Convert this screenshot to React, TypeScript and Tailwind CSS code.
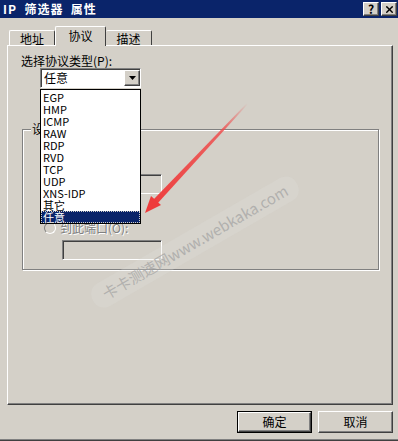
import { X } from "lucide-react";

const font = { fontFamily: "'Noto Sans CJK SC', 'Liberation Sans', sans-serif" };

const protocols = ["EGP", "HMP", "ICMP", "RAW", "RDP", "RVD", "TCP", "UDP", "XNS-IDP", "其它", "任意"];

const raised =
  "border border-t-white border-l-white border-r-[#404040] border-b-[#404040] shadow-[inset_-1px_-1px_0_#808080]";
const sunken =
  "border border-t-[#808080] border-l-[#808080] border-r-white border-b-white shadow-[inset_1px_1px_0_#404040]";
const disabledText = "text-[#808080] [text-shadow:1px_1px_0_#fff]";

// rows hidden under the open list keep only their radio circle
function Radio({ label }: { label?: string }) {
  return (
    <div className="flex items-center gap-[4px] h-[13px]">
      <div className="w-[12px] h-[12px] rounded-full border border-t-[#808080] border-l-[#808080] border-r-white border-b-white bg-[#d4d0c8] shrink-0" />
      {label && <span className={`text-[12px] leading-[13px] ${disabledText}`}>{label}</span>}
    </div>
  );
}

function PortBox() {
  return <div className={`ml-[18px] w-[100px] h-[20px] bg-[#d4d0c8] ${sunken}`} />;
}

export default function App() {
  return (
    <div className="relative w-[398px] h-[441px] bg-[#d4d0c8] overflow-hidden text-black select-none" style={font}>
      {/* title bar */}
      <div className="h-[18px] bg-[#0a246a] flex items-center justify-between pl-[3px] pr-[1px]">
        <span className="text-white font-bold text-[12px] leading-[14px] whitespace-pre tracking-[1px]">IP  筛选器  属性</span>
        <div className="flex gap-[2px] items-center">
          <div className={`w-[16px] h-[14px] bg-[#d4d0c8] flex items-center justify-center text-[12px] font-bold leading-none ${raised}`}>
            ?
          </div>
          <div className={`w-[16px] h-[14px] bg-[#d4d0c8] flex items-center justify-center ${raised}`}>
            <X size={11} strokeWidth={3} />
          </div>
        </div>
      </div>

      {/* tabs */}
      <div className="mt-[8px] ml-[9px] flex items-end h-[19px] relative z-10">
        <div className="w-[46px] h-[15px] border-t border-l border-white border-r border-r-[#404040] rounded-t-[2px] flex items-center justify-center text-[12px] leading-[12px] pt-[1px]">
          地址
        </div>
        <div className="w-[51px] h-[20px] -mb-px bg-[#d4d0c8] border-t border-l border-white border-r border-r-[#404040] rounded-t-[2px] flex items-start justify-center text-[12px] leading-[12px] pt-[3px]">
          协议
        </div>
        <div className="w-[46px] h-[15px] border-t border-white border-r border-r-[#404040] rounded-t-[2px] flex items-center justify-center text-[12px] leading-[12px] pt-[1px]">
          描述
        </div>
      </div>

      {/* tab panel */}
      <div className="ml-[7px] w-[386px] h-[360px] border border-t-white border-l-white border-r-[#404040] border-b-[#404040] shadow-[inset_-1px_-1px_0_#808080]">
        <div className="pl-[13px] pt-[8px] text-[12px] leading-[14px]">选择协议类型(P):</div>
        <div className={`ml-[32px] w-[101px] h-[20px] bg-white flex items-center justify-between ${sunken}`}>
          <span className="pl-[3px] text-[12px] leading-[12px]">任意</span>
          <div className={`w-[16px] h-[16px] bg-[#d4d0c8] flex items-center justify-center ${raised}`}>
            <svg width="7" height="4" viewBox="0 0 7 4">
              <path d="M0 0h7L3.5 4z" fill="#000" />
            </svg>
          </div>
        </div>

        {/* group box */}
        <div className="relative mt-[41px] ml-[14px] w-[357px] h-[141px] border border-[#808080] shadow-[inset_1px_1px_0_#fff,1px_1px_0_#fff]">
          <span className="absolute -top-[8px] left-[8px] px-[1px] bg-[#d4d0c8] text-[12px] leading-[14px]">设置</span>
          <div className="pl-[21px] pt-[9px] flex flex-col">
            <Radio />
            <div className="mt-[4px]">
              <Radio />
            </div>
            <div className="mt-[5px]">
              <PortBox />
            </div>
            <div className="mt-[10px]">
              <Radio />
            </div>
            <div className="mt-[4px]">
              <Radio label="到此端口(O):" />
            </div>
            <div className="mt-[6px]">
              <PortBox />
            </div>
          </div>
        </div>
      </div>

      {/* buttons */}
      <div className="mt-[6px] pr-[5px] flex justify-end gap-[6px]">
        <div className="w-[75px] h-[22px] border border-black">
          <div className={`w-full h-full flex items-center justify-center text-[12px] leading-[12px] ${raised}`}>确定</div>
        </div>
        <div className={`w-[75px] h-[22px] flex items-center justify-center text-[12px] leading-[12px] ${raised}`}>取消</div>
      </div>

      {/* window bottom edge */}
      <div className="absolute left-0 right-0 bottom-0 h-[2px] border-t border-t-[#808080] border-b border-b-[#404040]" />

      {/* watermark */}
      <div className="absolute left-[195px] top-[242px] -translate-x-1/2 -translate-y-1/2 -rotate-30 whitespace-nowrap rounded-[12px] bg-[#e0deda]/25 px-[12px] py-[4px] text-[15px] leading-[18px] text-[#a0a0a0]/70">
        卡卡测速网www.webkaka.com
      </div>

      {/* open dropdown list */}
      <div className="absolute left-[40px] top-[89px] w-[101px] h-[135px] bg-white border border-black py-px">
        {protocols.map((p) => (
          <div
            key={p}
            className={
              p === "任意"
                ? "h-[12px] pl-[2px] text-[11px] leading-[12px] bg-[#0a246a] text-white outline-1 outline-dotted outline-[#d4d0c8] -outline-offset-1"
                : "h-[12px] pl-[2px] text-[11px] leading-[12px]"
            }
          >
            {p}
          </div>
        ))}
      </div>

      {/* red arrow */}
      <svg className="absolute inset-0 pointer-events-none" width="398" height="441">
        <defs>
          <linearGradient id="ar" x1="247" y1="103" x2="150" y2="208" gradientUnits="userSpaceOnUse">
            <stop offset="0" stopColor="#f04848" stopOpacity="0" />
            <stop offset="0.25" stopColor="#f04848" stopOpacity="0.8" />
            <stop offset="1" stopColor="#ee3b3b" />
          </linearGradient>
        </defs>
        <polygon points="247,103 248,104 157,204 153,200" fill="url(#ar)" />
        <polygon points="145,213 151,196 161,205" fill="#ee3b3b" />
      </svg>
    </div>
  );
}
